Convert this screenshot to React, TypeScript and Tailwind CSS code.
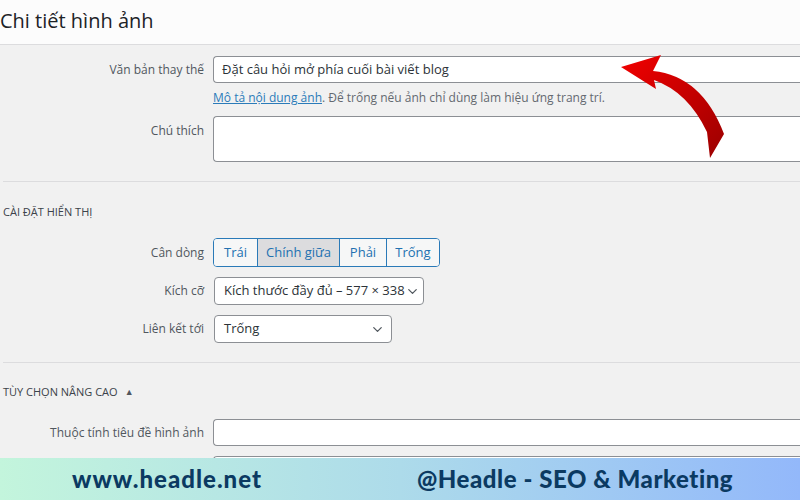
import { ChevronDown } from 'lucide-react'

const font = { fontFamily: '"Open Sans", "Noto Sans", sans-serif' }

function Label({ children }: { children: React.ReactNode }) {
  return <div className="w-[205px] shrink-0 pr-[1px] text-right text-[12px] text-[#50575e]">{children}</div>
}

function Select({ value, width }: { value: string; width: string }) {
  return (
    <div className={`${width} h-[28px] flex items-center justify-between pl-[9px] pr-[6px] bg-white border border-[#8c8f94] rounded-[4px] text-[13px] text-[#2c3338]`}>
      <span className="whitespace-nowrap">{value}</span>
      <ChevronDown size={15} strokeWidth={2} className="text-[#50575e] shrink-0" />
    </div>
  )
}

function Arrow() {
  return (
    <svg className="absolute left-[600px] top-[50px]" width="140" height="120" viewBox="0 0 140 120">
      <defs>
        <linearGradient id="ar" x1="0" y1="0" x2="1" y2="1">
          <stop offset="0" stopColor="#f20000" />
          <stop offset="1" stopColor="#9b0000" />
        </linearGradient>
      </defs>
      <path
        d="M21 17 L61 5 L53 21 Q102 26 124 84 L110 108 L107 82 Q88 42 54 30 L56 39 Z"
        fill="url(#ar)"
      />
    </svg>
  )
}

export default function App() {
  const aligns = ['Trái', 'Chính giữa', 'Phải', 'Trống']
  return (
    <div className="relative w-[800px] h-[500px] flex flex-col overflow-hidden bg-[#f1f1f1]" style={font}>
      <div className="flex-1 overflow-hidden">
        <div className="h-[45px] bg-[#fcfcfc] border-b border-[#dcdcde] flex items-center">
          <h1 className="text-[20px] text-[#1d2327] leading-none pb-[2px]">Chi tiết hình ảnh</h1>
        </div>

        <div className="pt-[11px]">
          <div className="flex items-center gap-[8px]">
            <Label>Văn bản thay thế</Label>
            <div className="flex-1 h-[27px] bg-white border border-[#8c8f94] border-r-0 rounded-l-[4px] flex items-center pl-[8px] text-[13px] text-[#2c3338]">
              Đặt câu hỏi mở phía cuối bài viết blog
            </div>
          </div>
          <div className="pl-[213px] mt-[7px] text-[12px] text-[#646970] h-[16px] leading-[16px]">
            <a className="text-[#2b7bb9] underline">Mô tả nội dung ảnh</a>. Để trống nếu ảnh chỉ dùng làm hiệu ứng trang trí.
          </div>
          <div className="flex items-start gap-[8px] mt-[10px]">
            <div className="pt-[6px]"><Label>Chú thích</Label></div>
            <div className="flex-1 h-[46px] bg-white border border-[#8c8f94] border-r-0 rounded-l-[4px]" />
          </div>
        </div>

        <div className="ml-[3px] mt-[19px] border-t border-[#dcdcde]" />

        <div className="pl-[3px] mt-[22px] text-[11px] text-[#3c434a] uppercase h-[16px] leading-[16px]">Cài đặt hiển thị</div>

        <div className="flex items-center gap-[8px] mt-[18px]">
          <Label>Cân dòng</Label>
          <div className="flex h-[29px] rounded-[4px] border border-[#2a7ab8] overflow-hidden text-[13px] text-[#2271b1]">
            {aligns.map((a, i) => (
              <div
                key={a}
                className={`flex items-center justify-center ${i > 0 ? 'border-l border-[#2a7ab8]' : ''} ${
                  i === 1 ? 'bg-[#dcdcde] w-[82px]' : 'bg-[#f6f7f7]'
                } ${i === 0 ? 'w-[43px]' : ''} ${i === 2 ? 'w-[47px]' : ''} ${i === 3 ? 'w-[53px]' : ''}`}
              >
                {a}
              </div>
            ))}
          </div>
        </div>

        <div className="flex items-center gap-[9px] mt-[10px]">
          <Label>Kích cỡ</Label>
          <Select value="Kích thước đầy đủ – 577 × 338" width="w-[210px]" />
        </div>

        <div className="flex items-center gap-[9px] mt-[10px]">
          <Label>Liên kết tới</Label>
          <Select value="Trống" width="w-[178px]" />
        </div>

        <div className="ml-[3px] mt-[19px] border-t border-[#dcdcde]" />

        <div className="pl-[3px] mt-[21px] flex items-center gap-[7px] text-[11px] text-[#3c434a] uppercase h-[16px]">
          <span>Tùy chọn nâng cao</span>
          <span className="text-[9px] text-[#50575e]">▲</span>
        </div>

        <div className="flex items-center gap-[8px] mt-[19px]">
          <Label>Thuộc tính tiêu đề hình ảnh</Label>
          <div className="flex-1 h-[27px] bg-white border border-[#8c8f94] border-r-0 rounded-l-[4px]" />
        </div>
        <div className="flex items-center gap-[8px] mt-[10px]">
          <div className="w-[205px]" />
          <div className="flex-1 h-[27px] bg-white border border-[#8c8f94] border-r-0 rounded-l-[4px]" />
        </div>
      </div>

      <div
        className="h-[42px] shrink-0 flex items-center bg-gradient-to-r from-[#c3f5dc] via-[#addbea] to-[#93b8fa] text-[#0b3a62] text-[24px] font-black"
        style={{ fontFamily: 'Lato, "Noto Sans", sans-serif' }}
      >
        <span className="ml-[72px] w-[345px] tracking-[1px]">www.headle.net</span>
        <span className="tracking-[0.55px]">@Headle - SEO &amp; Marketing</span>
      </div>

      <Arrow />
    </div>
  )
}
